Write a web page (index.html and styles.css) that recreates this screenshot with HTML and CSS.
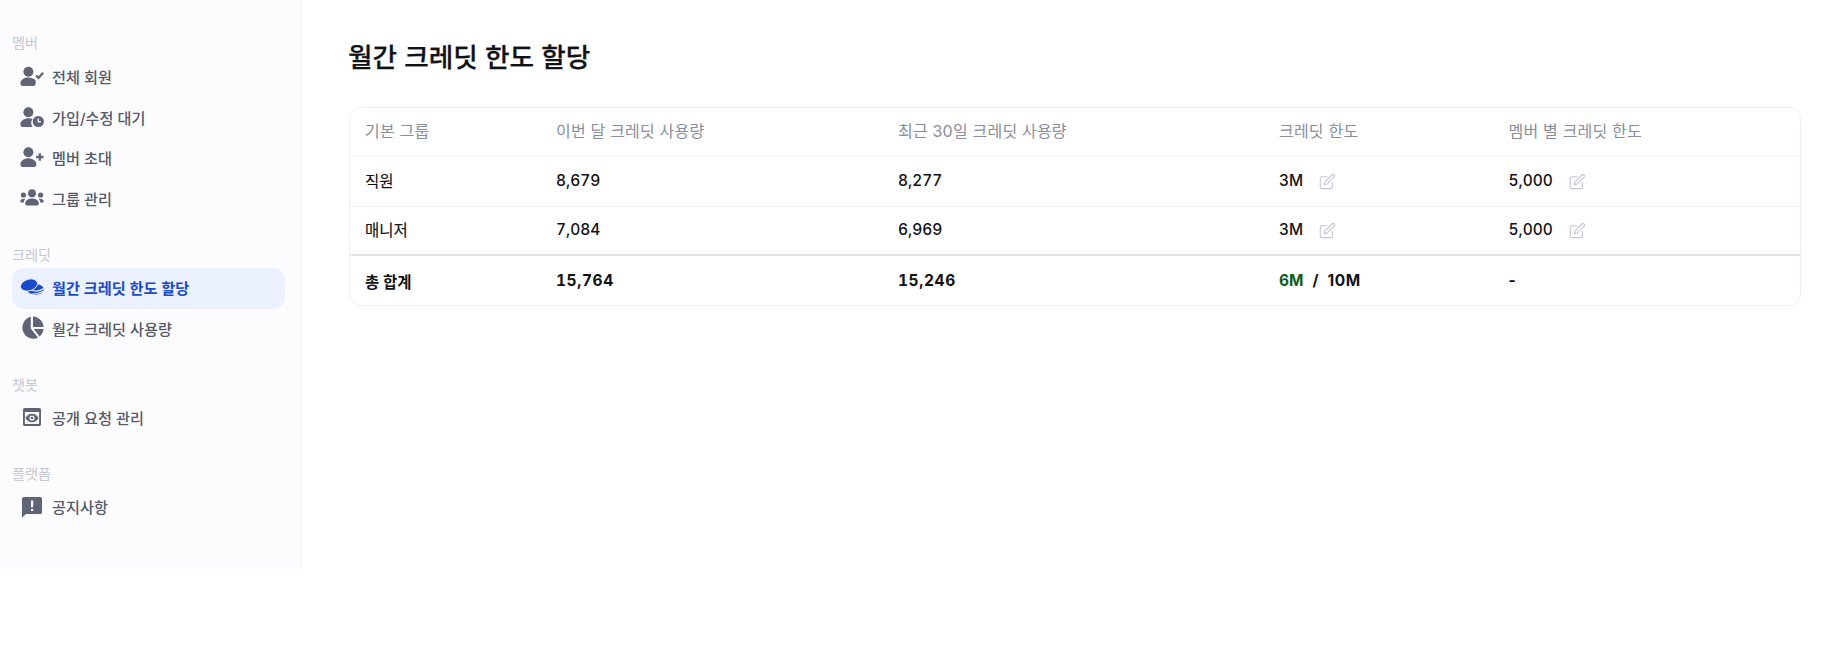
FILE: index.html
```html
<!DOCTYPE html>
<html lang="ko">
<head>
<meta charset="utf-8">
<title>월간 크레딧 한도 할당</title>
<link rel="stylesheet" href="styles.css">
</head>
<body>
<div class="app">
  <aside class="sidebar">
    <section class="group">
      <h2 class="group-label">멤버</h2>
      <a class="nav-item">
        <svg class="icon" viewBox="0 0 24 24"><circle cx="8.400" cy="7.700" r="5"/><path d="M0.400 19c0-3.600 4.500-5.600 8-5.600 2.600 0 5.200.9 7.200 2.600v3.500c0 1.400-.9 2.500-2.300 2.500H2.700C1.300 22 .4 20.700.4 19z"/><path class="stroke" d="M16 11.500l2.600 2.300 4.500-5"/></svg>
        <span>전체 회원</span>
      </a>
      <a class="nav-item">
        <svg class="icon" viewBox="0 0 24 24"><circle cx="8.400" cy="7.300" r="5"/><path d="M0.400 19c0-3.600 4.500-5.800 8-5.800 1.500 0 3 .3 4.300.9-1 1.100-1.500 2.500-1.500 4 0 1.400.5 2.700 1.300 3.900H2.700C1.300 22 .4 20.700.4 19z"/><circle cx="18.300" cy="16.500" r="5.600"/><path class="clock" d="M18.300 13.500v3.300h2.700"/></svg>
        <span>가입/수정 대기</span>
      </a>
      <a class="nav-item">
        <svg class="icon" viewBox="0 0 24 24"><circle cx="8.400" cy="7.300" r="5"/><path d="M0.400 19c0-3.600 4.500-5.800 8-5.800s8 2.200 8 5.800c0 1.700-1 3-2.500 3H2.700C1.300 22 .4 20.700.4 19z"/><path class="stroke" d="M19.800 8.300v7.400M16.100 12h7.400"/></svg>
        <span>멤버 초대</span>
      </a>
      <a class="nav-item">
        <svg class="icon" viewBox="0 0 24 24"><circle cx="12" cy="7.300" r="4"/><circle cx="3.400" cy="9" r="2.600"/><circle cx="20.600" cy="9" r="2.600"/><path d="M5.200 17.500c0-3 3.500-4.900 6.800-4.900s6.800 1.900 6.800 4.900c0 1.300-.7 2.100-2 2.100H7.200c-1.300 0-2-.8-2-2.100z"/><path d="M.3 15.500c0-1.600 1.400-2.700 3.300-2.700.6 0 1.200.1 1.700.3-1 1-1.500 2.200-1.500 3.400H1.400C.7 16.500.3 16.100.3 15.500zM23.700 15.500c0-1.600-1.400-2.700-3.300-2.700-.6 0-1.200.1-1.700.3 1 1 1.500 2.200 1.500 3.400h2.400c.7 0 1.100-.4 1.100-1z"/></svg>
        <span>그룹 관리</span>
      </a>
    </section>
    <section class="group">
      <h2 class="group-label">크레딧</h2>
      <a class="nav-item active">
        <svg class="icon" viewBox="0 0 24 24"><ellipse cx="15.500" cy="14.500" rx="8.300" ry="5.300" transform="rotate(-3 15.500 14.500)"/><path class="coin-line" d="M11 15c3.500 1.400 9 1.100 12.800-1.400"/><ellipse class="coin-top" cx="9" cy="10" rx="8.800" ry="5.800" transform="rotate(-18 9 10)"/><path class="coin-line" d="M1 17.300c5 2.900 15 3 22.500-1"/></svg>
        <span>월간 크레딧 한도 할당</span>
      </a>
      <a class="nav-item">
        <svg class="icon" viewBox="0 0 24 24"><path d="M10.800 .7v11.800l7.300 9.300A11.200 11.200 0 1 1 10.800 .7z"/><path d="M13 .6c5.800.4 10.200 4.900 10.600 10.400H13z"/><path d="M13.800 13.100h9.700c-.2 3-1.700 5.700-4 7.500z"/></svg>
        <span>월간 크레딧 사용량</span>
      </a>
    </section>
    <section class="group">
      <h2 class="group-label">챗봇</h2>
      <a class="nav-item">
        <svg class="icon" viewBox="0 0 24 24"><path fill-rule="evenodd" d="M4.800 3h14.400c1 0 1.800.8 1.800 1.800v14.400c0 1-.8 1.800-1.800 1.800H4.800c-1 0-1.800-.8-1.800-1.800V4.800C3 3.800 3.800 3 4.800 3zM4.900 7v12.100h14.200V7z"/><path fill-rule="evenodd" d="M12 8.800c3 0 5.400 1.700 6.500 4.200-1.100 2.500-3.500 4.200-6.500 4.200S6.600 15.500 5.500 13c1.100-2.500 3.500-4.200 6.500-4.200zm0 1.600a2.600 2.600 0 1 0 0 5.200 2.600 2.600 0 0 0 0-5.200zm0 1.300a1.300 1.300 0 1 1 0 2.600 1.300 1.300 0 0 1 0-2.600z"/></svg>
        <span>공개 요청 관리</span>
      </a>
    </section>
    <section class="group">
      <h2 class="group-label">플랫폼</h2>
      <a class="nav-item">
        <svg class="icon" viewBox="0 0 24 24"><path fill-rule="evenodd" d="M4 3h16.200c1 0 1.800.8 1.800 1.800v13.400c0 1-.8 1.800-1.800 1.800H6l-4 3.800V5c0-1.100.9-2 2-2zm7 3.500v6.800h2.200V6.500zm0 8.400v2.200h2.200v-2.200z"/></svg>
        <span>공지사항</span>
      </a>
    </section>
  </aside>
  <main class="content">
    <h1 class="title">월간 크레딧 한도 할당</h1>
    <div class="table-card">
      <table class="table">
        <colgroup>
          <col class="col-a"><col class="col-b"><col class="col-c"><col class="col-d"><col class="col-e">
        </colgroup>
        <thead>
          <tr>
            <th>기본 그룹</th>
            <th>이번 달 크레딧 사용량</th>
            <th>최근 30일 크레딧 사용량</th>
            <th>크레딧 한도</th>
            <th>멤버 별 크레딧 한도</th>
          </tr>
        </thead>
        <tbody>
          <tr>
            <td class="name">직원</td>
            <td>8,679</td>
            <td>8,277</td>
            <td><span class="editable">3M<svg class="edit" viewBox="0 0 16 16"><path d="M8 3.500H2.700c-.9 0-1.500.6-1.500 1.500v8.200c0 .9.600 1.500 1.500 1.500h8.400c.9 0 1.500-.6 1.500-1.500V8.500"/><path d="M5.700 8.400 12.200 1.900c.6-.6 1.400-.6 2 0 .6.600.6 1.400 0 2L7.700 10.400l-2.600.6z"/></svg></span></td>
            <td><span class="editable">5,000<svg class="edit" viewBox="0 0 16 16"><path d="M8 3.500H2.700c-.9 0-1.500.6-1.500 1.500v8.200c0 .9.600 1.500 1.500 1.500h8.400c.9 0 1.500-.6 1.500-1.500V8.500"/><path d="M5.700 8.400 12.200 1.900c.6-.6 1.400-.6 2 0 .6.600.6 1.400 0 2L7.700 10.400l-2.600.6z"/></svg></span></td>
          </tr>
          <tr>
            <td class="name">매니저</td>
            <td>7,084</td>
            <td>6,969</td>
            <td><span class="editable">3M<svg class="edit" viewBox="0 0 16 16"><path d="M8 3.500H2.700c-.9 0-1.500.6-1.500 1.500v8.200c0 .9.600 1.500 1.500 1.500h8.400c.9 0 1.500-.6 1.500-1.500V8.500"/><path d="M5.700 8.400 12.200 1.900c.6-.6 1.400-.6 2 0 .6.600.6 1.400 0 2L7.700 10.400l-2.600.6z"/></svg></span></td>
            <td><span class="editable">5,000<svg class="edit" viewBox="0 0 16 16"><path d="M8 3.500H2.700c-.9 0-1.500.6-1.500 1.500v8.200c0 .9.600 1.500 1.500 1.500h8.400c.9 0 1.500-.6 1.500-1.500V8.500"/><path d="M5.700 8.400 12.200 1.900c.6-.6 1.400-.6 2 0 .6.600.6 1.400 0 2L7.700 10.400l-2.600.6z"/></svg></span></td>
          </tr>
        </tbody>
        <tfoot>
          <tr>
            <td>총 합계</td>
            <td class="sum">15,764</td>
            <td class="sum">15,246</td>
            <td><span class="used">6M</span><span class="sep">/</span><span class="limit">10M</span></td>
            <td>-</td>
          </tr>
        </tfoot>
      </table>
    </div>
  </main>
</div>
</body>
</html>
```

FILE: styles.css
```css
* { box-sizing: border-box; }
html, body { margin: 0; padding: 0; background: #fff; }
body {
  font-family: Inter, "Noto Sans CJK KR", "Noto Sans", sans-serif;
  color: #111216;
}
.app { display: flex; align-items: flex-start; }
.sidebar {
  width: 302px;
  height: 569px;
  flex: none;
  padding: 32px 16px 0 12px;
  background: #fcfcff;
  border-right: 1px solid #eff0f5;
}
.group { margin-bottom: 24.500px; }
.group:first-child { margin-bottom: 26px; }
.group-label {
  margin: 0;
  height: 24px;
  line-height: 22px;
  font-size: 14.200px;
  font-weight: 400;
  color: #c6c8d1;
}
.nav-item {
  display: flex;
  align-items: center;
  gap: 8px;
  height: 40.500px;
  padding-left: 8px;
  border-radius: 12px;
  font-size: 15.200px;
  font-weight: 500;
  color: #555a69;
}
.group + .group .nav-item { padding-bottom: 2px; }
.nav-item.active {
  background: #ebf1fe;
  color: #1a4bc9;
  font-weight: 600;
}
.icon { width: 24px; height: 24px; flex: none; fill: #5f6476; }
.nav-item.active .icon { fill: #1a4bc9; }
.icon .stroke { fill: none; stroke: #5f6476; stroke-width: 2.300; }
.icon .clock { fill: none; stroke: #fff; stroke-width: 1.300; }
.icon .coin-line { fill: none; stroke: #ebf1fe; stroke-width: 1.200; }
.icon .coin-top { stroke: #ebf1fe; stroke-width: .9; }
.content {
  flex: 1;
  min-width: 0;
  padding: 0 45px 0 47px;
}
.title {
  margin: 0 0 0 -1px;
  height: 107px;
  padding-top: 37px;
  line-height: 40px;
  font-size: 26.700px;
  font-weight: 500;
  -webkit-text-stroke: .25px #111216;
  color: #111216;
}
.table-card {
  border: 1px solid #eff0f6;
  border-radius: 12px;
  overflow: hidden;
}
.table {
  width: 100%;
  table-layout: fixed;
  border-collapse: separate;
  border-spacing: 0;
  font-size: 15.500px;
}
.col-a { width: 191px; }
.col-b { width: 342px; }
.col-c { width: 381px; }
.col-d { width: 229.500px; }
th, td { padding: 0 0 0 15px; text-align: left; }
th {
  height: 49px;
  padding-bottom: 5px;
  font-size: 16px;
  letter-spacing: .2px;
  font-weight: 400;
  color: #8a8e9c;
  border-bottom: 1px solid #f5f6fa;
}
tbody td {
  height: 49.500px;
  padding-bottom: 2px;
  font-weight: 450;
  font-variant-numeric: tabular-nums;
  border-bottom: 1px solid #eff0f6;
}
tbody .name { font-weight: 400; -webkit-text-stroke: .15px #111216; }
tbody tr:last-child td { border-bottom: 2px solid #e4e5ec; }
tfoot td { height: 49px; font-weight: 700; }
.sum { letter-spacing: .6px; font-variant-numeric: tabular-nums; }
.limit { letter-spacing: .5px; }
.editable { display: inline-flex; align-items: center; gap: 16px; }
.edit {
  width: 17px;
  height: 17px;
  margin-top: 3px;
  fill: none;
  stroke: #c4c7d3;
  stroke-width: 1.100;
}
.used { color: #0e5c22; }
.sep { margin: 0 9px; }
```
